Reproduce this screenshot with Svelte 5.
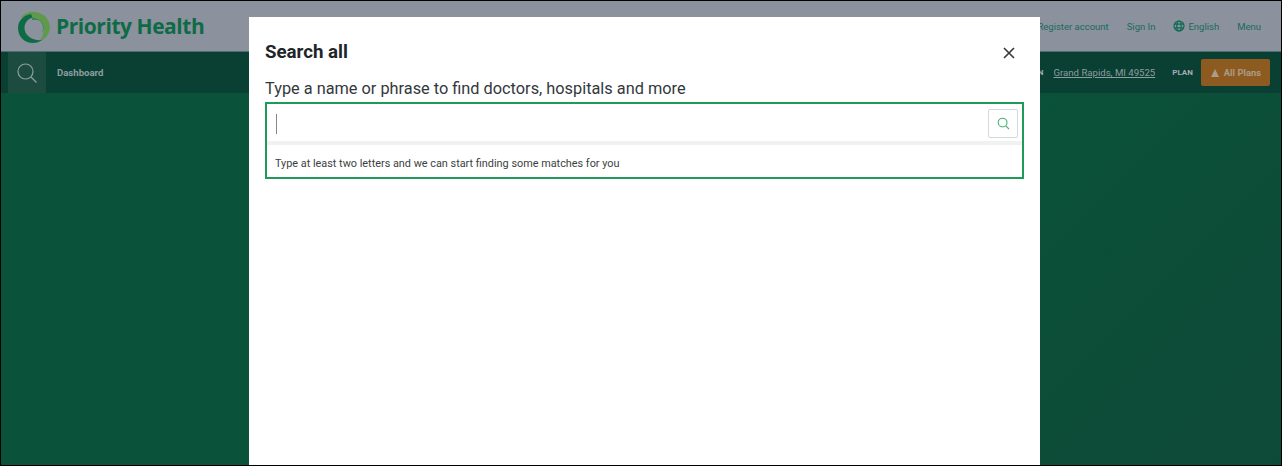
<script lang="ts">
	const links = ['Register account', 'Sign In'];
</script>

<div class="frame">
	<header class="top">
		<a class="brand" href="#home">
			<svg class="logo" width="32" height="33" viewBox="0 0 32 33" aria-hidden="true">
				<path d="M3 7A17 17 0 0 1 32 16C32 24 27 30 21 31.5 24 28 26 24 25.5 18A11.5 11.5 0 0 0 9 9Z" fill="#5f9a4c" />
				<path d="M13 4C5 5.5 0 11 0 18 0 27 7 33 15 33 18.5 33 21.5 32 24 30 15 31 6.5 26 6.5 18 6.5 13 9.5 9 14.5 7.5Z" fill="#0f6b45" />
				<path d="M14 10A7.5 7.5 0 0 1 20 25C23.5 23 26 20.5 25.5 17 25 12 20 8 14.5 8Z" fill="#1f7a4c" />
			</svg>
			<span class="name">Priority Health</span>
		</a>
		<nav class="utility">
			{#each links as link}
				<a href="#link">{link}</a>
			{/each}
			<a class="lang" href="#lang">
				<svg width="12" height="12" viewBox="0 0 12 12" fill="none" stroke="#0f6b55" stroke-width="1.2" aria-hidden="true">
					<circle cx="6" cy="6" r="5" />
					<ellipse cx="6" cy="6" rx="2.2" ry="5" />
					<path d="M1 4.2h10M1 7.8h10" />
				</svg>
				English
			</a>
			<a href="#menu">Menu</a>
		</nav>
	</header>

	<div class="navbar">
		<div class="nav-left">
			<div class="search-tab">
				<svg width="22" height="22" viewBox="0 0 22 22" fill="none" stroke="#8f9ca0" stroke-width="1.2" aria-hidden="true">
					<circle cx="9.5" cy="9.5" r="7.5" />
					<path d="M15 15l5.5 5.5" />
				</svg>
			</div>
			<a class="dash" href="#dashboard">Dashboard</a>
		</div>
		<div class="nav-right">
			<span class="plan-label loc">LOCATION</span>
			<a class="place" href="#place">Grand Rapids, MI 49525</a>
			<span class="plan-label">PLAN</span>
			<button class="plans">
				<svg width="8" height="8" viewBox="0 0 8 8" aria-hidden="true"><path d="M4 0L8 8H0z" fill="#ab9c88" /></svg>
				All Plans
			</button>
		</div>
	</div>

	<main class="body"></main>

	<div class="modal" role="dialog" aria-label="Search all">
		<div class="modal-head">
			<h2>Search all</h2>
			<button class="close" aria-label="Close">
				<svg width="12" height="12" viewBox="0 0 12 12" stroke="#33383c" stroke-width="1.6" aria-hidden="true">
					<path d="M1 1l10 10M11 1L1 11" />
				</svg>
			</button>
		</div>
		<label class="prompt" for="q">Type a name or phrase to find doctors, hospitals and more</label>
		<div class="box">
			<div class="input-row">
				<span class="caret"></span>
				<input id="q" type="text" />
				<button class="go" aria-label="Search">
					<svg width="13" height="13" viewBox="0 0 13 13" fill="none" stroke="#4caf78" stroke-width="1.1" aria-hidden="true">
						<circle cx="5.6" cy="5.6" r="4.4" />
						<path d="M8.8 8.8l3.2 3.2" />
					</svg>
				</button>
			</div>
			<p class="hint">Type at least two letters and we can start finding some matches for you</p>
		</div>
	</div>
</div>

<style>
	:global(body) {
		margin: 0;
	}

	.frame {
		position: relative;
		box-sizing: border-box;
		display: flex;
		flex-direction: column;
		height: 466px;
		overflow: hidden;
		border: 1px solid #000;
		font-family: Roboto, 'Liberation Sans', sans-serif;
		background: #0a5239;
	}

	.top {
		display: flex;
		align-items: center;
		justify-content: space-between;
		flex: 0 0 50px;
		padding: 0 20px 0 17px;
		background: #8b929d;
	}

	.brand {
		display: flex;
		align-items: center;
		gap: 6px;
		text-decoration: none;
	}

	.name {
		font-family: 'Open Sans', sans-serif;
		font-size: 21px;
		font-weight: 700;
		letter-spacing: -0.45px;
		color: #0f6b45;
	}

	.utility {
		display: flex;
		align-items: center;
		gap: 18px;
		font-size: 9.5px;
	}

	.utility a {
		color: #1a6a5c;
		text-decoration: none;
	}

	.lang {
		display: flex;
		align-items: center;
		gap: 3px;
	}

	.navbar {
		display: flex;
		align-items: center;
		justify-content: space-between;
		flex: 0 0 42px;
		padding: 0 11px 0 7px;
		background: #094033;
		border-top: 1px solid #4d6f70;
		box-sizing: border-box;
	}

	.nav-left {
		display: flex;
		align-items: center;
		height: 100%;
	}

	.search-tab {
		display: flex;
		align-items: center;
		justify-content: center;
		width: 38px;
		height: 100%;
		background: #1c4b40;
	}

	.dash {
		margin-left: 11px;
		font-size: 9.6px;
		font-weight: 700;
		color: #8f9ca0;
		text-decoration: none;
	}

	.nav-right {
		display: flex;
		align-items: center;
		color: #8f9ca0;
	}

	.place {
		font-size: 9.6px;
		color: #8f9ca0;
	}

	.plan-label {
		margin: 0 8px 0 17px;
		font-size: 8px;
		font-weight: 700;
		color: #a3adb0;
	}

	.loc {
		margin: 0 10px 0 0;
	}

	.plans {
		display: flex;
		align-items: center;
		gap: 5px;
		height: 27px;
		padding: 0 9px 0 10px;
		border: 0;
		border-radius: 2px;
		background: #8d5a1f;
		color: #ab9c88;
		font: 700 9.4px Roboto, sans-serif;
	}

	.body {
		flex: 1;
		background: linear-gradient(135deg, #0a5239 60%, #0e4a38 100%);
	}

	.modal {
		position: absolute;
		top: 16px;
		left: 248px;
		bottom: -20px;
		width: 791px;
		box-sizing: border-box;
		padding: 24px 16px 0;
		background: #fff;
	}

	.modal-head {
		display: flex;
		align-items: flex-start;
		justify-content: space-between;
	}

	h2 {
		margin: 0;
		font-size: 18.7px;
		line-height: 22px;
		font-weight: 700;
		color: #212529;
	}

	.close {
		display: flex;
		margin: 6px 9px 0 0;
		padding: 0;
		border: 0;
		background: none;
	}

	.prompt {
		display: block;
		margin-top: 16px;
		font-size: 16.32px;
		line-height: 20px;
		color: #33383c;
	}

	.box {
		margin-top: 3px;
		border: 2px solid #1f9a5a;
	}

	.input-row {
		display: flex;
		align-items: center;
		box-sizing: border-box;
		height: 41px;
		padding: 2px 4px 0 9px;
		border-bottom: 4px solid #f0f2f2;
	}

	.caret {
		width: 1px;
		height: 20px;
		background: #888;
	}

	input {
		flex: 1;
		min-width: 0;
		border: 0;
		outline: 0;
	}

	.go {
		display: flex;
		align-items: center;
		justify-content: center;
		width: 30px;
		height: 29px;
		padding: 0;
		border: 1px solid #d5d9da;
		border-radius: 2px;
		background: #fff;
	}

	.hint {
		margin: 0;
		padding: 9px 8px 4px;
		font-size: 10.87px;
		line-height: 19px;
		color: #3c3f42;
	}
</style>
